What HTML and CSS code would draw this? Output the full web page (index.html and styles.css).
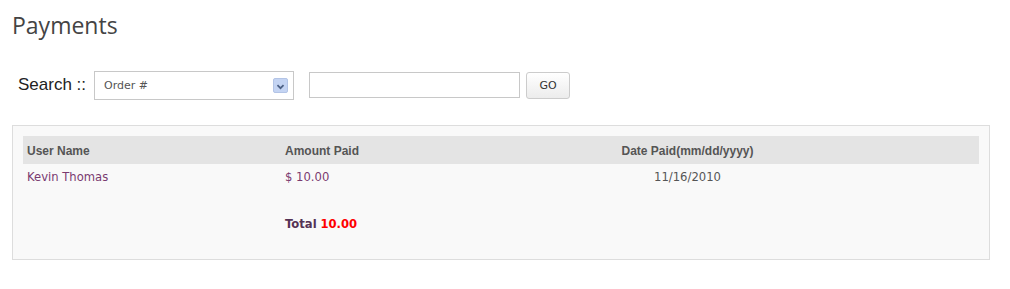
FILE: index.html
```html
<!DOCTYPE html>
<html lang="en">
<head>
  <meta charset="UTF-8">
  <title>Payments</title>
  <link rel="stylesheet" href="styles.css">
</head>
<body>
  <h1 class="page-title">Payments</h1>

  <!-- search bar -->
  <div class="search-bar">
    <span class="search-label">Search ::</span>
    <div class="select-box">
      <span class="select-text">Order #</span>
      <span class="select-arrow">
        <svg width="15" height="15" viewBox="0 0 15 15">
          <path d="M4 6 L7.5 9.5 L11 6" fill="none" stroke="#4d6185" stroke-width="2"/>
        </svg>
      </span>
    </div>
    <input type="text" class="search-input">
    <button class="go-btn">GO</button>
  </div>

  <!-- payments list -->
  <div class="panel">
    <table class="pay-table">
      <tr class="head-row">
        <th class="col-user">User Name</th>
        <th class="col-amount">Amount Paid</th>
        <th class="col-date">Date Paid(mm/dd/yyyy)</th>
      </tr>
      <tr class="data-row">
        <td>Kevin Thomas</td>
        <td>$ 10.00</td>
        <td class="date-cell">11/16/2010</td>
      </tr>
      <tr class="total-row">
        <td></td>
        <td><b>Total</b> <span class="total-num">10.00</span></td>
        <td></td>
      </tr>
    </table>
  </div>
</body>
</html>
```

FILE: styles.css
```css
/* page */
body {
  margin: 0;
  padding: 0 20px 0 12px;
  background-color: #ffffff;
  font-family: 'DejaVu Sans', Verdana, sans-serif;
}

.page-title {
  font-family: 'Open Sans', 'Noto Sans', sans-serif;
  font-weight: normal;
  font-size: 23px;
  color: #444444;
  margin: 0;
  padding-top: 9px;
  height: 40px;
}

/* search bar */
.search-bar {
  display: flex;
  align-items: center;
  margin-top: 21px;
  height: 30px;
}

.search-label {
  font-family: 'Liberation Sans', Arial, sans-serif;
  font-size: 17px;
  color: #222222;
  margin-left: 6px;
  margin-right: 8px;
}

.select-box {
  width: 198px;
  height: 27px;
  border: 1px solid #c8c8c8;
  background-color: #ffffff;
  display: flex;
  align-items: center;
  justify-content: space-between;
}

.select-text {
  font-size: 11px;
  color: #555555;
  margin-left: 9px;
}

.select-arrow {
  width: 15px;
  height: 15px;
  margin-right: 5px;
  background-color: #c4d4f3;
  border: 1px solid #b3c4e6;
  border-radius: 2px;
  box-sizing: border-box;
  display: flex;
}

.search-input {
  width: 211px;
  height: 26px;
  box-sizing: border-box;
  border: 1px solid #c8c8c8;
  margin-left: 15px;
  padding: 0;
}

.go-btn {
  width: 44px;
  height: 27px;
  margin-left: 6px;
  border: 1px solid #cccccc;
  border-radius: 3px;
  background: linear-gradient(#ffffff, #ececec);
  font-family: 'DejaVu Sans', Verdana, sans-serif;
  font-size: 11px;
  color: #333333;
  padding: 0;
}

/* panel */
.panel {
  margin-top: 25px;
  border: 1px solid #dddddd;
  background-color: #f9f9f9;
  padding: 10px;
  height: 113px;
}

.pay-table {
  width: 100%;
  border-collapse: collapse;
}

.pay-table th {
  background-color: #e4e4e4;
  font-family: 'Liberation Sans', Arial, sans-serif;
  font-size: 12px;
  color: #555555;
  text-align: left;
  height: 26px;
  padding: 2px 4px 0;
}

.col-user { width: 250px; }
.col-amount { width: 107px; }
.pay-table th.col-date { text-align: center; }

.pay-table td {
  font-size: 11.6px;
  color: #7a3a70;
  padding: 0 4px;
  height: 26px;
}

.pay-table td.date-cell {
  text-align: center;
  color: #555555;
}

.total-row td {
  height: 68px;
  color: #553355;
}

.total-num {
  color: #ff0000;
  font-weight: bold;
}
```
